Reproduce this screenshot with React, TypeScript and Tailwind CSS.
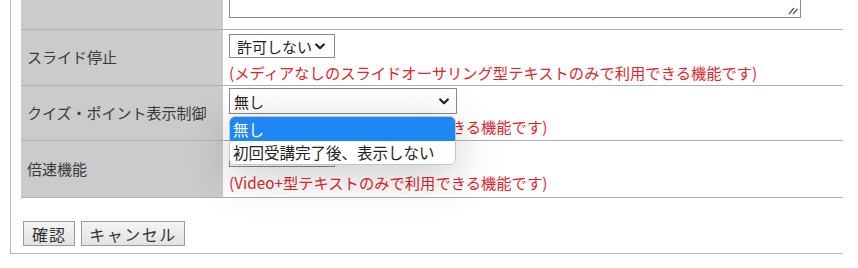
import React from "react";

const FONT = { fontFamily: '"Noto Sans CJK JP", "Noto Sans", sans-serif' };

function Chevron({ className = "" }: { className?: string }) {
  return (
    <svg className={className} width="10" height="7" viewBox="0 0 10 7">
      <polyline points="1.2,1.5 5,5.2 8.8,1.5" fill="none" stroke="#222" strokeWidth="2.2" strokeLinecap="round" strokeLinejoin="round" />
    </svg>
  );
}

function Note({ children, className = "" }: { children: React.ReactNode; className?: string }) {
  return <div className={`text-[15.3px] leading-[22px] text-[#e3262c] whitespace-nowrap ${className}`}>{children}</div>;
}

export default function App() {
  return (
    <div className="relative w-[858px] h-[268px] overflow-hidden bg-white text-[#333]" style={FONT}>
      <div className="ml-[10px] w-[833px] border-l border-b border-[#b8b8b8] pl-[10px] pb-[7px]">
        {/* Row 1: textarea (cut off) */}
        <div className="flex h-[30px] border-b border-[#b0b0b0]">
          <div className="w-[202px] bg-[#cbcbcb]" />
          <div className="flex-1 pl-[6px]">
            <div className="relative w-[572px] h-[18px] border-l border-r border-b border-[#8a8a8a] bg-white">
              <svg className="absolute right-[2px] bottom-[2px]" width="10" height="9" viewBox="0 0 10 9">
                <line x1="1" y1="8" x2="6" y2="2" stroke="#555" strokeWidth="1.3" />
                <line x1="5" y1="8" x2="9.5" y2="3" stroke="#555" strokeWidth="1.3" />
              </svg>
            </div>
          </div>
        </div>

        {/* Row 2 */}
        <div className="flex h-[56px] border-b border-[#b0b0b0]">
          <div className="w-[202px] bg-[#cbcbcb] flex items-center pl-[6px] text-[15px] text-[#3a3a3a]">スライド停止</div>
          <div className="flex-1 pl-[6px] pt-[4px]">
            <div className="flex items-center w-[106px] h-[24px] border border-[#8a8a8a] bg-white pl-[7px] pr-[9px] text-[15px] text-[#222]">
              <span className="flex-1 leading-none">許可しない</span>
              <Chevron />
            </div>
            <Note className="mt-[3px]">(メディアなしのスライドオーサリング型テキストのみで利用できる機能です)</Note>
          </div>
        </div>

        {/* Row 3 */}
        <div className="flex h-[55px] border-b border-[#b0b0b0]">
          <div className="w-[202px] bg-[#cbcbcb] flex items-center pl-[6px] text-[15px] text-[#3a3a3a]">クイズ・ポイント表示制御</div>
          <div className="flex-1 pl-[6px] pt-[2px]">
            <div className="flex items-center w-[228px] h-[26px] border border-[#8a8a8a] bg-white pl-[4px] pr-[7px] text-[15px] text-[#222]">
              <span className="flex-1 leading-none">無し</span>
              <Chevron />
            </div>
            <Note className="mt-[1px]">(Video+型テキストのみで利用できる機能です)</Note>
          </div>
        </div>

        {/* Row 4 */}
        <div className="flex h-[57px] border-b border-[#b0b0b0]">
          <div className="w-[202px] bg-[#cbcbcb] flex items-center pl-[6px] text-[15px] text-[#3a3a3a]">倍速機能</div>
          <div className="flex-1 pl-[6px] pt-[2px]">
            <div className="flex items-center w-[106px] h-[24px] border border-[#8a8a8a] bg-white pl-[7px] pr-[9px] text-[15px] text-[#222]">
              <span className="flex-1 leading-none">許可しない</span>
              <Chevron />
            </div>
            <Note className="mt-[4px]">(Video+型テキストのみで利用できる機能です)</Note>
          </div>
        </div>

        {/* Buttons */}
        <div className="flex gap-[6px] mt-[23px] ml-[2px]">
          <button className="h-[25px] w-[52px] border border-[#9a9a9a] bg-gradient-to-b from-[#f4f4f4] to-[#e2e2e2] text-[16px] leading-none text-[#333] tracking-[1px]">確認</button>
          <button className="h-[25px] w-[104px] border border-[#9a9a9a] bg-gradient-to-b from-[#f4f4f4] to-[#e2e2e2] text-[16px] leading-none text-[#333] tracking-[1.5px]">キャンセル</button>
        </div>
      </div>

      {/* Open dropdown popup */}
      <div className="absolute left-[229px] top-[116px] w-[227px] rounded-[6px] border border-[#c4c4c4] bg-white shadow-[0_10px_45px_rgba(0,0,0,0.22)] overflow-hidden">
        <div className="h-[24px] bg-[#1f86f5] text-white text-[15.5px] leading-[24px] pl-[3px]">無し</div>
        <div className="h-[23px] bg-white text-[#222] text-[15.5px] leading-[23px] pl-[3px] whitespace-nowrap">初回受講完了後、表示しない</div>
      </div>
    </div>
  );
}
